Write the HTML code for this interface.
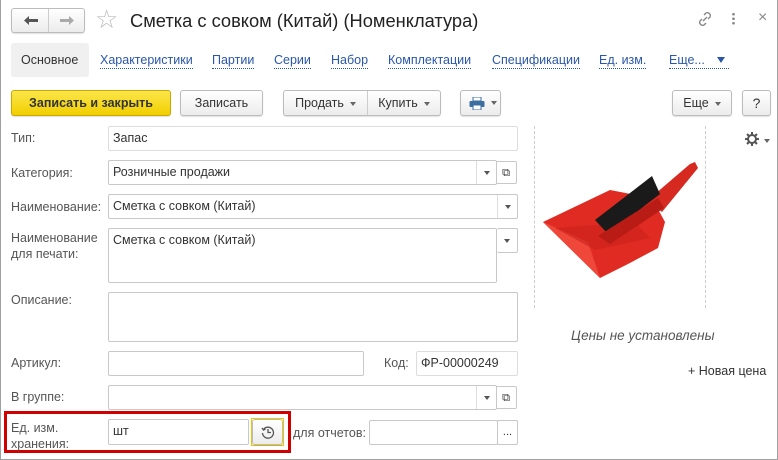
<!DOCTYPE html>
<html><head><meta charset="utf-8"><style>
*{box-sizing:border-box;margin:0;padding:0}
body{width:778px;height:460px;background:#fff;font-family:"Liberation Sans",Arial,sans-serif;font-size:12.5px;color:#333;position:relative;overflow:hidden}
.a{position:absolute}
.win{left:0;top:0;width:778px;height:460px;border:1px solid #a0a0a0;border-top:none}
.btn{position:absolute;border:1px solid #bcbcbc;border-radius:3px;background:linear-gradient(#fff,#ececec);height:26px;line-height:24px;text-align:center;color:#333;box-shadow:0 1px 1px rgba(0,0,0,.12)}
.inp{position:absolute;border:1px solid #c8c8c8;border-radius:2px;background:#fff;height:25px;line-height:23px;padding-left:4px;color:#333}
.lbl{position:absolute;left:11px;color:#555}
.lnk{position:absolute;top:52px;color:#2a57a8;border-bottom:1px dotted #2a57a8;line-height:16px}
.dd{position:absolute;top:0;right:0;width:20px;height:100%;border-left:1px solid #ddd}
.dd:after{content:"";position:absolute;left:7px;top:10px;border:3px solid transparent;border-top:4px solid #555}
.op{position:absolute;top:0;right:-21px;width:21px;height:100%;border:1px solid #c8c8c8;border-left:none;border-radius:0 2px 2px 0;font-size:11px;text-align:center}
.tri{display:inline-block;border:3px solid transparent;border-top:4px solid #666;vertical-align:middle;margin-left:6px;margin-top:3px}
</style></head><body>
<div class="a win"></div>
<div class="btn" style="left:11px;top:8px;width:74px;height:25px">
<span class="a" style="left:0;top:0;width:37px;border-right:1px solid #ccc;height:23px"></span>
<svg class="a" style="left:12px;top:6px" width="14" height="11" viewBox="0 0 14 11"><path d="M0 5.5L5 1v3h9v3H5v3z" fill="#555"/></svg>
<svg class="a" style="left:48px;top:6px" width="14" height="11" viewBox="0 0 14 11"><path d="M14 5.5L9 1v3H0v3h9v3z" fill="#aaa"/></svg></div>
<div class="a" style="left:95px;top:4px;font-size:26px;color:#bbb">&#9734;</div>
<div class="a" style="left:130px;top:10px;font-size:18.3px;color:#222">Сметка с совком (Китай) (Номенклатура)</div>
<svg class="a" style="left:696px;top:10px" width="18" height="18" viewBox="0 0 18 18" fill="none" stroke="#888" stroke-width="1.4"><path d="M7 11l4-4M8 5l2-2a3 3 0 014 4l-2 2M10 13l-2 2a3 3 0 01-4-4l2-2"/></svg>
<div class="a" style="left:732px;top:12px;width:3px;height:13px;background:radial-gradient(circle,#888 1.2px,transparent 1.5px) 0 0/3px 4.5px"></div>
<div class="a" style="left:758px;top:9px;color:#888;font-size:16px">×</div>

<div class="a" style="left:11px;top:43px;width:78px;height:34px;background:#f0f0f0;border-radius:3px;line-height:34px;padding-left:10px;color:#333">Основное</div>
<span class="lnk" style="left:100px">Характеристики</span>
<span class="lnk" style="left:212px">Партии</span>
<span class="lnk" style="left:274px">Серии</span>
<span class="lnk" style="left:331px">Набор</span>
<span class="lnk" style="left:388px">Комплектации</span>
<span class="lnk" style="left:492px">Спецификации</span>
<span class="lnk" style="left:599px">Ед. изм.</span>
<span class="lnk" style="left:669px;width:60px">Еще... <span style="display:inline-block;border:4px solid transparent;border-top:6px solid #2a57a8;margin-left:9px;vertical-align:-3px"></span></span>

<div class="btn" style="left:11px;top:90px;width:160px;background:linear-gradient(#fbe64a,#f2cf00);border-color:#c9a800;font-weight:bold;color:#333">Записать и закрыть</div>
<div class="btn" style="left:180px;top:90px;width:83px">Записать</div>
<div class="btn" style="left:283px;top:90px;width:158px"><span class="a" style="left:0;width:84px;border-right:1px solid #ccc">Продать<i class="tri"></i></span><span class="a" style="left:84px;width:72px">Купить<i class="tri"></i></span></div>
<div class="btn" style="left:460px;top:90px;width:41px"><svg class="a" style="left:8px;top:6px" width="16" height="13" viewBox="0 0 16 13"><rect x="4" y="0" width="8" height="4" fill="#fff" stroke="#3c6ea0"/><rect x="0.5" y="4" width="15" height="6" rx="1" fill="#3c6ea0"/><rect x="4" y="8" width="8" height="5" fill="#fff" stroke="#3c6ea0"/></svg><i class="tri a" style="left:24px;top:7px"></i></div>
<div class="btn" style="left:672px;top:90px;width:60px">Еще<i class="tri"></i></div>
<div class="btn" style="left:742px;top:90px;width:29px;font-size:14px">?</div>

<div class="lbl" style="top:131px">Тип:</div>
<div class="inp" style="left:108px;top:126px;width:410px;border-color:#ddd">Запас</div>
<div class="lbl" style="top:166px">Категория:</div>
<div class="inp" style="left:108px;top:160px;width:389px">Розничные продажи<div class="dd"></div><div class="op">&#10697;</div></div>
<div class="lbl" style="top:200px">Наименование:</div>
<div class="inp" style="left:108px;top:194px;width:410px">Сметка с совком (Китай)<div class="dd"></div></div>
<div class="lbl" style="top:230px;line-height:16px">Наименование<br>для печати:</div>
<div class="inp" style="left:108px;top:228px;width:389px;height:55px;line-height:23px">Сметка с совком (Китай)</div>
<div class="inp" style="left:497px;top:228px;width:21px;height:25px;border-left:none"><div class="dd" style="border:none"></div></div>
<div class="lbl" style="top:293px">Описание:</div>
<div class="inp" style="left:108px;top:292px;width:410px;height:50px"></div>
<div class="lbl" style="top:356px">Артикул:</div>
<div class="inp" style="left:108px;top:351px;width:256px"></div>
<div class="a" style="left:384px;top:356px;color:#555">Код:</div>
<div class="inp" style="left:416px;top:351px;width:102px;border-color:#ddd">ФР-00000249</div>
<div class="lbl" style="top:390px">В группе:</div>
<div class="inp" style="left:108px;top:385px;width:389px"><div class="dd"></div><div class="op">&#10697;</div></div>

<div class="a" style="left:4px;top:411px;width:287px;height:42px;border:3px solid #d00000"></div>
<div class="lbl" style="top:420px;line-height:16px">Ед. изм.<br>хранения:</div>
<div class="inp" style="left:108px;top:419px;width:141px;height:26px">шт</div>
<div class="a" style="left:251px;top:418px;width:33px;height:28px;border:1px solid #f0c800"></div>
<div class="btn" style="left:252px;top:419px;width:31px;height:26px"><svg class="a" style="left:8px;top:5px" width="14" height="14" viewBox="0 0 14 14" fill="none" stroke="#555" stroke-width="1.3"><path d="M2.5 4.5A5.5 5.5 0 1 1 1.5 8"/><path d="M7 4v3.5h3"/><path d="M1 3l1.5 2 2-1"/></svg></div>
<div class="a" style="left:293px;top:426px;color:#555">для отчетов:</div>
<div class="inp" style="left:369px;top:420px;width:129px"></div>
<div class="inp" style="left:497px;top:420px;width:21px;padding:0;text-align:center;font-size:11px">...</div>

<div class="a" style="left:534px;top:126px;height:182px;border-left:1px dashed #ccc"></div>
<div class="a" style="left:705px;top:126px;height:182px;border-left:1px dashed #ccc"></div>
<svg class="a" style="left:540px;top:150px" width="160" height="130" viewBox="0 0 160 130">
<path d="M3 72 L70 40 L112 48 L125 72 L118 98 L88 114 L60 128 Z" fill="#e02b22"/>
<path d="M3 72 L60 128 L48 92 Z" fill="#f0473b"/>
<path d="M15 78 L95 72 L110 88 L55 100 Z" fill="#c9221a" opacity=".6"/>
<path d="M108 50 L150 14 L155 12 L158 18 L122 62 Z" fill="#d62a20"/>
<path d="M55 70 L112 26 L120 44 L68 84 Z" fill="#1a1a1a"/>
<path d="M58 86 L118 48 L124 58 L70 94 Z" fill="#b81c15"/>
</svg>
<svg class="a" style="left:744px;top:131px" width="16" height="16" viewBox="0 0 16 16"><circle cx="8" cy="8" r="4" fill="none" stroke="#555" stroke-width="2"/><path d="M8 1v3M8 12v3M1 8h3M12 8h3M3 3l2 2M11 11l2 2M3 13l2-2M11 5l2-2" stroke="#555" stroke-width="2"/></svg>
<i class="tri a" style="left:758px;top:136px"></i>
<div class="a" style="left:571px;top:328px;font-style:italic;color:#555;font-size:13.5px">Цены не установлены</div>
<div class="a" style="left:688px;top:364px;color:#333">+ Новая цена</div>
</body></html>
